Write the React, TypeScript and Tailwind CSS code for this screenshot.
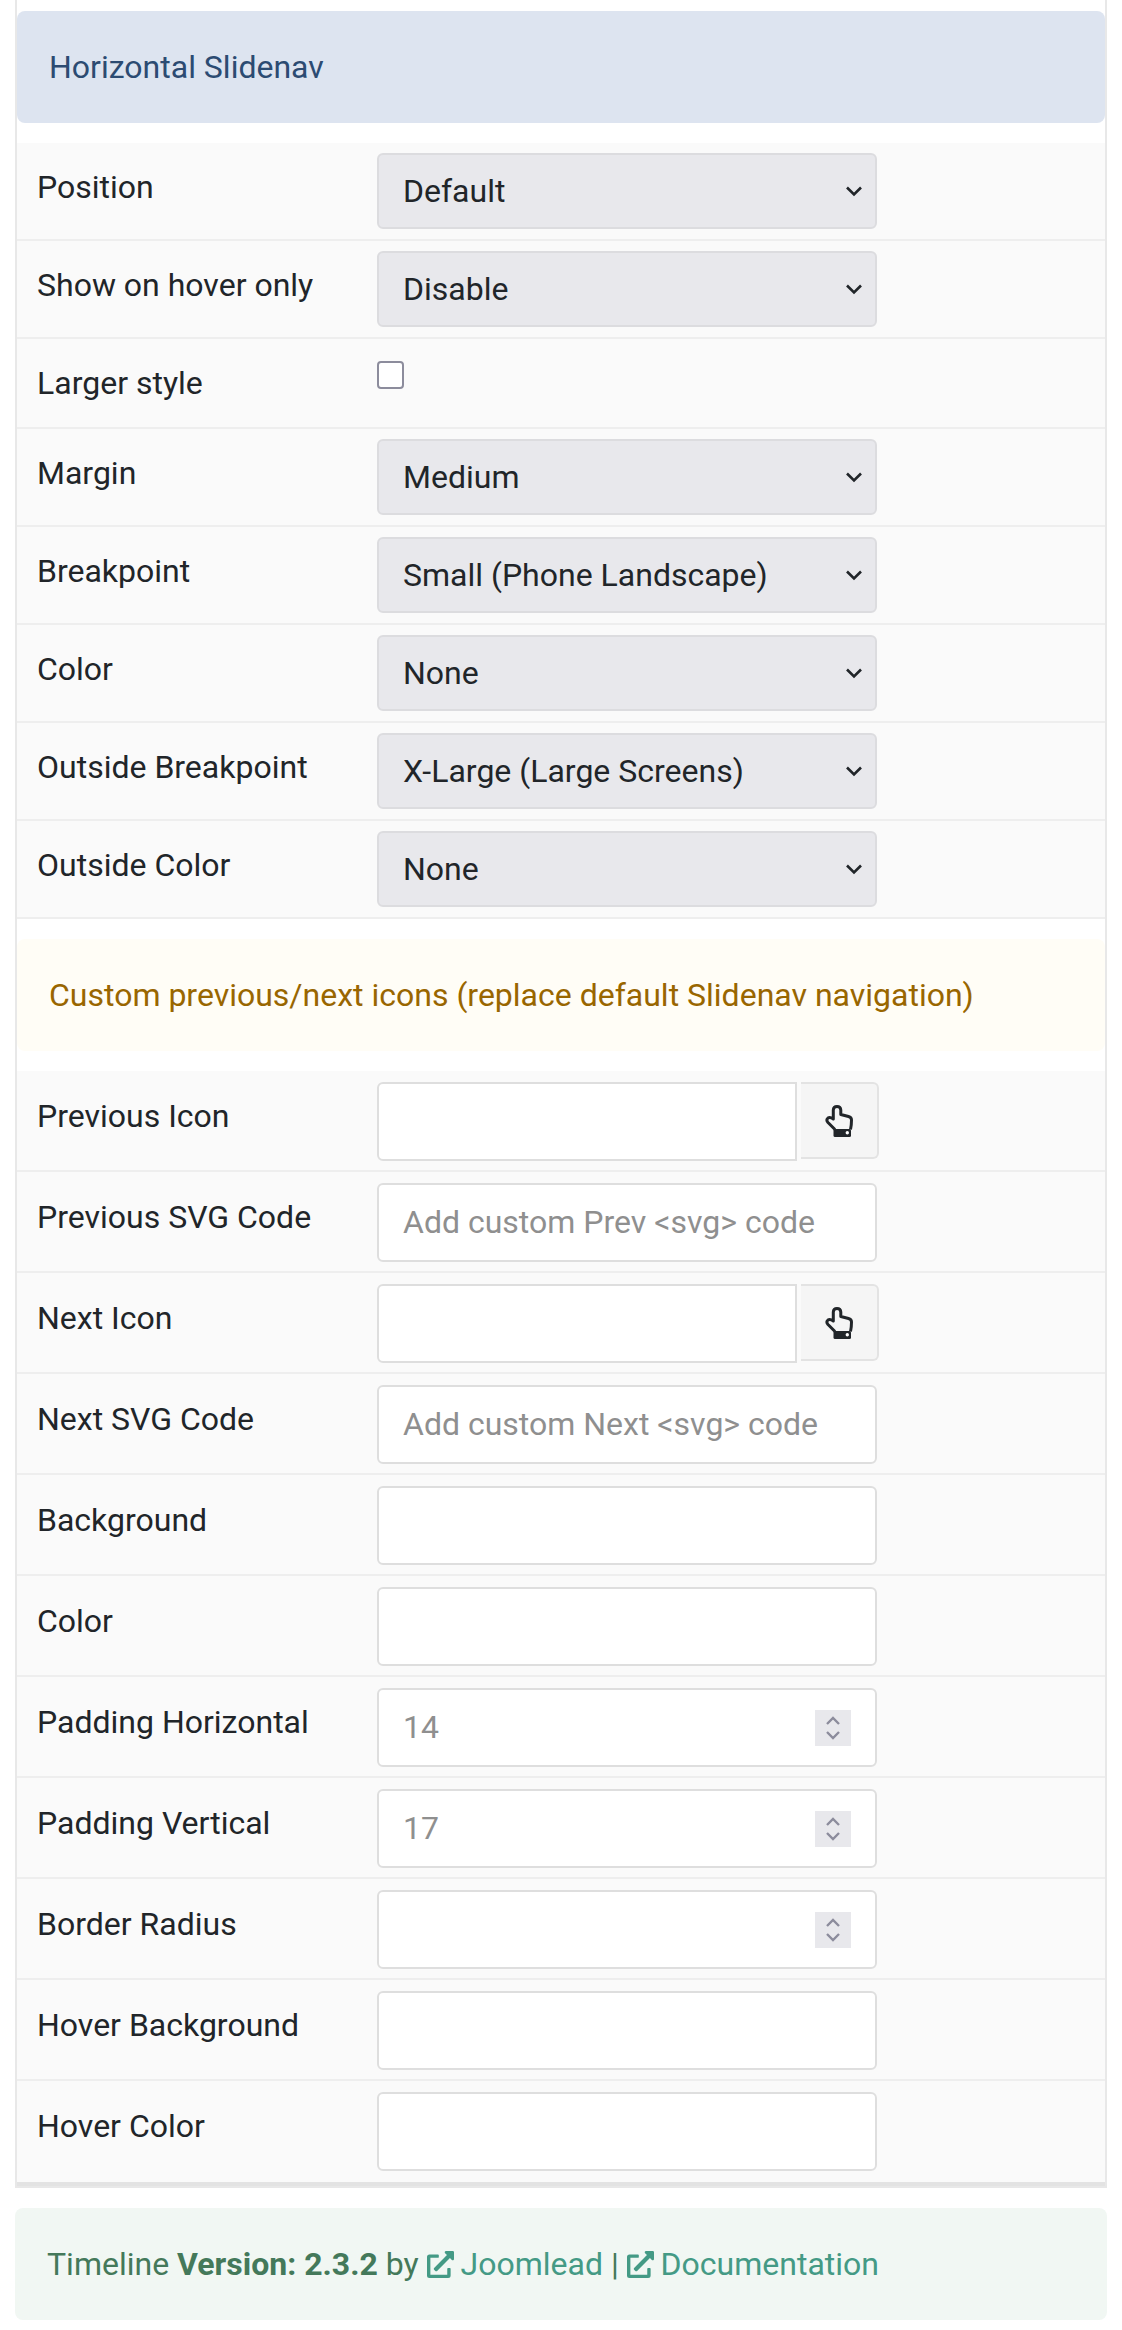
import { FaExternalLinkAlt } from 'react-icons/fa';

const Chevron = () => (
  <svg className="absolute right-[14px] top-1/2 -translate-y-1/2 text-[#212529] pointer-events-none" width="18" height="12" viewBox="0 0 18 12" fill="none">
    <path d="M2 2.5 L9 9.5 L16 2.5" stroke="currentColor" strokeWidth="2.6" />
  </svg>
);

const Spinner = () => (
  <div className="absolute right-[26px] top-1/2 -translate-y-1/2 w-9 h-9 bg-[#e8e8ec] flex items-center justify-center pointer-events-none">
    <svg width="16" height="26" viewBox="0 0 16 26" fill="none" className="text-[#8c8c9c]">
      <path d="M2 9 L8 3 L14 9 M2 17 L8 23 L14 17" stroke="currentColor" strokeWidth="2.4" />
    </svg>
  </div>
);

const HandIcon = () => (
  <svg width="28" height="32" viewBox="0 0 28 32" fill="none" className="text-[#212529]">
    <path
      d="M10 24.5 L3 17.5 Q0.8 15 3 13 Q5 11.5 8.3 14 L8.3 5 Q8.5 1.6 12 1.6 Q15.6 1.6 15.8 5 L15.8 9.5 L23.5 11.5 Q26.5 12.3 26.5 15 Q26.5 20 25.5 24.5"
      stroke="currentColor"
      strokeWidth="3"
      strokeLinejoin="round"
    />
    <rect x="8.5" y="24" width="17.5" height="8" rx="1.5" fill="currentColor" />
    <circle cx="22.3" cy="27.8" r="1.7" fill="white" />
  </svg>
);

const Row = ({ label, tall, children }: { label: string; tall?: boolean; children: React.ReactNode }) => (
  <div className={`flex bg-[#fafafa] border-b-2 border-[#eeeeee] ${tall ? 'pt-[11px] pb-[9px] last:pb-[11px] last:border-b-0' : 'py-[10px]'}`}>
    <div className="w-[360px] pl-5 pt-[14px] shrink-0 text-[32px] leading-[40px] text-[#212529]">{label}</div>
    {children}
  </div>
);

const SelectRow = ({ label, value }: { label: string; value: string }) => (
  <Row label={label}>
    <div className="relative w-[500px] h-[76px]">
      <select className="w-full h-full appearance-none bg-[#e8e8ec] border-2 border-[#dcdcdf] rounded-[6px] pl-[24px] text-[32px] text-[#212529]" defaultValue={value}>
        <option>{value}</option>
      </select>
      <Chevron />
    </div>
  </Row>
);

const inputClass = 'w-full h-[79px] bg-white border-2 border-[#dedede] rounded-[6px] pl-[24px] pb-[2px] text-[32px] text-[#212529] placeholder:text-[#8f8f8f]';

const TextRow = ({ label, placeholder }: { label: string; placeholder?: string }) => (
  <Row label={label} tall>
    <div className="w-[500px]">
      <input type="text" className={inputClass} placeholder={placeholder} />
    </div>
  </Row>
);

const NumberRow = ({ label, placeholder }: { label: string; placeholder?: string }) => (
  <Row label={label} tall>
    <div className="relative w-[500px]">
      <input type="text" className={inputClass} placeholder={placeholder} />
      <Spinner />
    </div>
  </Row>
);

const IconRow = ({ label }: { label: string }) => (
  <Row label={label} tall>
    <div className="flex">
      <input type="text" className="w-[420px] h-[79px] bg-white border-2 border-[#dedede] rounded-l-[6px]" />
      <button className="ml-[4px] w-[78px] h-[77px] bg-[#f5f5f5] border-2 border-l-0 border-[#e3e3e3] rounded-r-[6px] flex items-center justify-center">
        <HandIcon />
      </button>
    </div>
  </Row>
);

export default function App() {
  return (
    <div className="w-[1122px] bg-white font-['Roboto',sans-serif] pb-[10px]">
      <div className="mx-[15px] border-x-2 border-b-2 border-[#e8e8e8] pt-[11px]">
        <div className="h-[112px] bg-[#dde4f0] rounded-[8px] pl-[32px] flex items-center text-[32px] text-[#2c4b72]">Horizontal Slidenav</div>
        <div className="mt-5">
          <SelectRow label="Position" value="Default" />
          <SelectRow label="Show on hover only" value="Disable" />
          <div className="flex bg-[#fafafa] border-b-2 border-[#eeeeee] h-[90px]">
            <div className="w-[360px] pl-5 pt-[24px] shrink-0 text-[32px] leading-[40px] text-[#212529]">Larger style</div>
            <input type="checkbox" className="appearance-none w-[27px] h-[28px] mt-[22px] bg-white border-2 border-[#8c8c9c] rounded-[4px]" />
          </div>
          <SelectRow label="Margin" value="Medium" />
          <SelectRow label="Breakpoint" value="Small (Phone Landscape)" />
          <SelectRow label="Color" value="None" />
          <SelectRow label="Outside Breakpoint" value="X-Large (Large Screens)" />
          <SelectRow label="Outside Color" value="None" />
        </div>
        <div className="mt-5 h-[112px] bg-[#fffdf6] rounded-[8px] pl-[32px] flex items-center text-[32px] text-[#996600]">Custom previous/next icons (replace default Slidenav navigation)</div>
        <div className="mt-5">
          <IconRow label="Previous Icon" />
          <TextRow label="Previous SVG Code" placeholder="Add custom Prev <svg> code" />
          <IconRow label="Next Icon" />
          <TextRow label="Next SVG Code" placeholder="Add custom Next <svg> code" />
          <TextRow label="Background" />
          <TextRow label="Color" />
          <NumberRow label="Padding Horizontal" placeholder="14" />
          <NumberRow label="Padding Vertical" placeholder="17" />
          <NumberRow label="Border Radius" />
          <TextRow label="Hover Background" />
          <TextRow label="Hover Color" />
        </div>
        <div className="h-1 bg-[#e3e3e3]" />
      </div>
      <div className="mx-[15px] mt-5 h-[112px] bg-[#f1f7f3] rounded-[8px] pl-8 flex items-center text-[32px] text-[#44795a] whitespace-pre">
        Timeline <b className="font-bold">Version: 2.3.2</b> by <FaExternalLinkAlt size={27} className="text-[#449a85] -mr-px" /><span className="text-[#449a85]"> Joomlead</span> | <FaExternalLinkAlt size={27} className="text-[#449a85] -mr-px" /><span className="text-[#449a85]"> Documentation</span>
      </div>
    </div>
  );
}
